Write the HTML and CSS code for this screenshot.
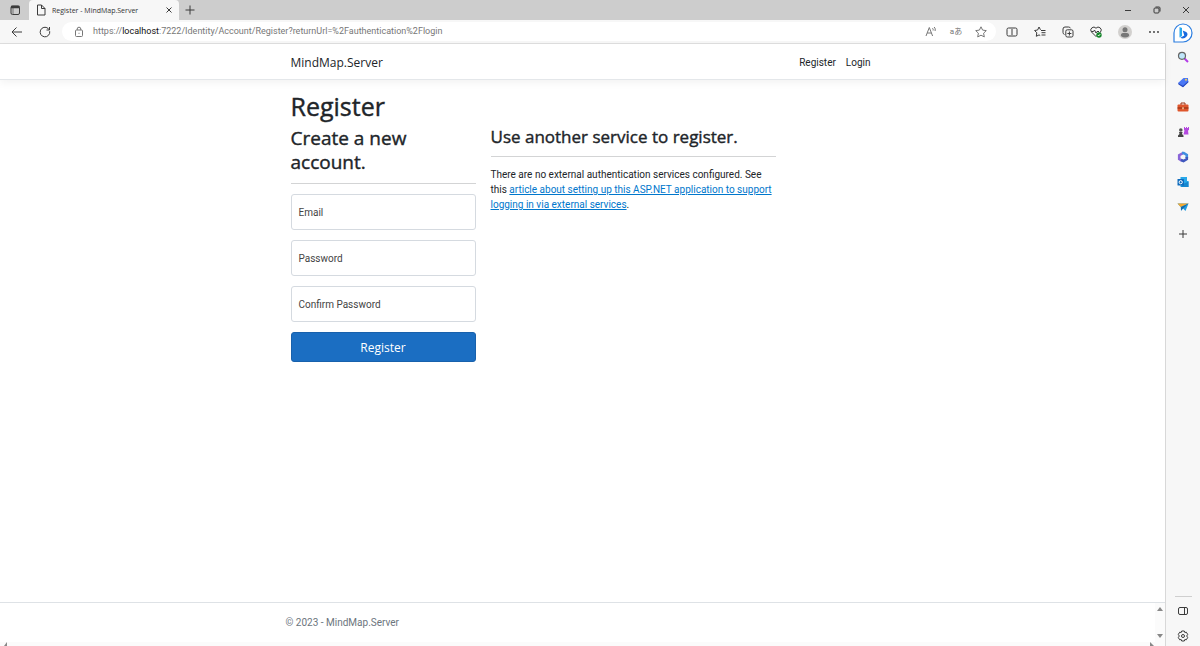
FILE: index.html
```html
<!DOCTYPE html>
<html lang="en">
<head>
<meta charset="utf-8">
<title>Register - MindMap.Server</title>
<link rel="stylesheet" href="styles.css">
</head>
<body>
<header class="tabs">
  <button class="tab-menu" aria-label="Tab actions"><svg class="icon" viewBox="0 0 12 12"><rect x="2" y="2" width="8.500" height="8.500" rx="1.500"/><path d="M2 3h8.500" stroke-width="2.500"/><path d="M4 4v6" stroke-width=".6"/></svg></button>
  <div class="tab">
    <svg class="icon" viewBox="0 0 12 12"><path d="M2.500 1h4l3.500 3.500V11h-7.500zM6.500 1v3.500H10"/></svg>
    <span class="tab-title">Register - MindMap.Server</span>
    <button class="tab-close" aria-label="Close tab"><svg class="icon" viewBox="0 0 12 12"><path d="M3.500 3.500l5 5M8.500 3.500l-5 5"/></svg></button>
  </div>
  <button class="new-tab" aria-label="New tab"><svg class="icon" viewBox="0 0 12 12"><path d="M6 1.500v9M1.500 6h9"/></svg></button>
  <div class="window-controls">
    <button aria-label="Minimize"><svg class="icon" viewBox="0 0 12 12"><path d="M3 6.500h6"/></svg></button>
    <button aria-label="Restore"><svg class="icon" viewBox="0 0 12 12"><rect x="3" y="4" width="5" height="5" rx="1"/><path d="M4.500 3H8q1 0 1 1v3.500"/></svg></button>
    <button aria-label="Close"><svg class="icon" viewBox="0 0 12 12"><path d="M3 3l6 6M9 3L3 9"/></svg></button>
  </div>
</header>
<div class="shell">
  <div class="browser">
    <div class="toolbar">
      <button aria-label="Back"><svg class="icon" viewBox="0 0 12 12"><path d="M11 6H1M5.500 1.500L1 6l4.500 4.500"/></svg></button>
      <button class="reload" aria-label="Reload"><svg class="icon" viewBox="0 0 12 12"><path d="M10.700 5.200a4.800 4.800 0 1 1-1.600-2.800L10.500 4M10.500 1v3h-3"/></svg></button>
      <div class="address">
        <svg class="icon muted" viewBox="0 0 12 12"><rect x="2.500" y="4" width="7" height="6.500" rx="1"/><path d="M4.200 4V3a1.800 1.800 0 0 1 3.600 0v1M6 6.800v1"/></svg>
        <span class="url">https://<b>localhost</b>:7222/Identity/Account/Register?returnUrl=%2Fauthentication%2Flogin</span>
        <div class="address-tools">
          <button aria-label="Read aloud"><svg class="icon muted" viewBox="0 0 12 12"><path d="M1 10l3.300-8.500L7.600 10M2.200 7h4.200M7.500 2.200q1 1 .6 2.300M9.200 1q1.600 1.600.9 4"/></svg></button>
          <button class="translate" aria-label="Translate">aあ</button>
          <button aria-label="Add to favorites"><svg class="icon muted" viewBox="0 0 12 12"><path d="M6 .8l1.600 3.300 3.700.5-2.700 2.600.7 3.700L6 9.200l-3.300 1.700.7-3.700L.7 4.600l3.700-.5z"/></svg></button>
        </div>
      </div>
      <div class="tools">
        <button aria-label="Split screen"><svg class="icon" viewBox="0 0 12 12"><path d="M5 2H2.500Q1 2 1 3.500v5Q1 10 2.500 10H5M7 2h2.500Q11 2 11 3.500v5Q11 10 9.500 10H7M6 1v10"/></svg></button>
        <button aria-label="Favorites"><svg class="icon" viewBox="0 0 12 12"><path d="M6.500 3.800L5 1 3.600 4 .6 4.500l2.200 2.300-.5 3.500L5 8.900l1.200.6M7 4.500h4.500M7.500 6.700h4M7.500 9h4"/></svg></button>
        <button aria-label="Collections"><svg class="icon" viewBox="0 0 12 12"><rect x="3.800" y="3.800" width="7.200" height="7.200" rx="1.500"/><path d="M2.500 8.500Q1 8 1 6.500V3Q1 1 3 1h3.500Q8 1 8.500 2.300M7.400 5.500v4M5.400 7.500h4"/></svg></button>
        <button aria-label="Browser essentials"><svg class="icon" viewBox="0 0 12 12"><path d="M6 10.500L1.500 6a2.700 2.700 0 0 1 4.500-3.800A2.700 2.700 0 0 1 10.500 6zM1.500 5.500h2l1-1.500 1.500 3 1-1.500h2"/><circle class="green" cx="9" cy="9" r="2.700"/><path class="white-line" d="M7.800 9l.9.9 1.500-1.700"/></svg></button>
        <button aria-label="Profile"><svg class="avatar" viewBox="0 0 14 14"><circle cx="7" cy="7" r="7" fill="#d2d0ce"/><circle cx="7" cy="4.800" r="2.500" fill="#777"/><path d="M2.800 11q0-3 2.300-3h3.800q2.300 0 2.300 3Q7 14 2.800 11z" fill="#777"/></svg></button>
        <button aria-label="Settings and more"><svg class="icon" viewBox="0 0 12 12"><g class="solid"><circle cx="2" cy="6" r=".9"/><circle cx="6" cy="6" r=".9"/><circle cx="10" cy="6" r=".9"/></g></svg></button>
      </div>
    </div>
    <div class="page">
      <nav class="navbar">
        <div class="container nav-row">
          <a class="brand" href="#">MindMap.Server</a>
          <div class="nav-links"><a href="#">Register</a><a href="#">Login</a></div>
        </div>
      </nav>
      <main class="container content">
        <h1>Register</h1>
        <div class="columns">
          <form class="account">
            <h2>Create a new account.</h2>
            <hr>
            <div class="field"><input id="email" type="email"><label for="email">Email</label></div>
            <div class="field"><input id="password" type="password"><label for="password">Password</label></div>
            <div class="field"><input id="confirm" type="password"><label for="confirm">Confirm Password</label></div>
            <button class="submit" type="button">Register</button>
          </form>
          <section class="external">
            <h3>Use another service to register.</h3>
            <hr>
            <p>There are no external authentication services configured. See<br>this <a href="#">article about setting up this ASP.NET application to support<br>logging in via external services</a>.</p>
          </section>
        </div>
      </main>
      <footer class="footer">
        <div class="footer-main"><div class="container footer-text">© 2023 - MindMap.Server</div></div>
        <div class="scroll-y">
          <svg class="arrow" viewBox="0 0 6 4"><path d="M0 4l3-4 3 4z"/></svg>
          <svg class="arrow" viewBox="0 0 6 4"><path d="M0 0l3 4 3-4z"/></svg>
        </div>
      </footer>
      <div class="scroll-x">
        <svg class="arrow" viewBox="0 0 4 4"><path d="M4 0v4H1z"/></svg>
        <svg class="arrow" viewBox="0 0 4 4"><path d="M0 0l4 4H0z"/></svg>
      </div>
    </div>
  </div>
  <aside class="sidebar">
    <button class="bing" aria-label="Bing"><svg viewBox="0 0 20 20"><path d="M1 19V10a9 9 0 1 1 9 9z" fill="#fff" stroke="#2b7de0" stroke-width="1.200"/><path d="M6.500 4l2.500.9v8L6.500 14.500z" fill="#2aa8ee"/><path d="M9.700 7.500l3.500 1.500q2.300 2 .6 4.200-2.800 3.300-6.500 1.600l4-2.400z" fill="#1769df"/></svg></button>
    <button aria-label="Search"><svg viewBox="0 0 12 12"><path d="M7.500 7.500L11 11" stroke="#b43ce8" stroke-width="2"/><circle cx="5" cy="4.800" r="3.500" fill="#bfe6fa" stroke="#666" stroke-width="1.200"/></svg></button>
    <button aria-label="Shopping"><svg viewBox="0 0 12 12"><path d="M1 7l5.500-5H11l.3 4.200L6 11.200z" fill="#4a78f5"/><path d="M1 7l.5 1.500L6 11.200l5.300-5V5L6 9.700z" fill="#2747bd"/><circle cx="9" cy="3.800" r="1" fill="#ffd34d"/></svg></button>
    <button aria-label="Tools"><svg viewBox="0 0 12 12"><path d="M4 4V2h4v2" fill="none" stroke="#963111"/><rect x=".5" y="3.500" width="11" height="7" rx="1" fill="#df562c"/><path d="M.5 6.500h11v1H.5z" fill="#87290f"/><path d="M5.300 6.200h1.400v2H5.300z" fill="#ffd3a3"/></svg></button>
    <button aria-label="Games"><svg viewBox="0 0 12 12"><path d="M7 1h1v1h1V1h1v1h1V1h1v3l-1 .5.5 4H6.500l1-4L7 4z" fill="#b44ae0"/><circle cx="3.800" cy="4" r="1.800" fill="#555"/><path d="M2 6h3.600L5 8l1.500 1.500V11H1V9.500L2.500 8z" fill="#444"/></svg></button>
    <button aria-label="Microsoft 365"><svg viewBox="0 0 12 12"><g fill="none" stroke-width="2.600"><path d="M6.500 1.800L2.200 4.200v3.800L5 9.700" stroke="#8a65d8"/><path d="M5 2h1.700L9.800 4v3" stroke="#408ee0"/><path d="M9.800 6v2L6.500 10 4 9" stroke="#4058bd"/></g></svg></button>
    <button aria-label="Outlook"><svg viewBox="0 0 12 12"><path d="M3.500 1H10v4h1.500v6h-8z" fill="#28a8ea"/><path d="M6 8l5.500-2.500V11H4z" fill="#1687cf"/><rect x=".5" y="3" width="6.500" height="6.500" rx=".6" fill="#0f6cbd"/><circle cx="3.700" cy="6.200" r="1.600" fill="none" stroke="#fff"/></svg></button>
    <button aria-label="Drop"><svg viewBox="0 0 12 12"><path d="M.5 2.500h11L8.500 10 6 7.500l-2 2.300L3.700 6z" fill="#239be0"/><path d="M.5 2.500h11L3.700 6z" fill="#f4a82d"/><path d="M4 9.800L4 6l7.500-3.500L6 7.500z" fill="#126aaa"/></svg></button>
    <button class="add" aria-label="Customize"><svg class="icon" viewBox="0 0 12 12"><path d="M6 2v8M2 6h8"/></svg></button>
    <div class="sidebar-bottom">
      <button aria-label="Hide sidebar"><svg class="icon" viewBox="0 0 12 12"><rect x="1.500" y="2.500" width="9" height="7" rx="1.500"/><path d="M7.500 2.500v7"/></svg></button>
      <button aria-label="Settings"><svg class="icon" viewBox="0 0 12 12"><path d="M4.700 1h2.600l.5 1.500 1.500-.3 1.400 2.200L9.700 6l1 1.600-1.400 2.200-1.500-.3-.5 1.500H4.700l-.5-1.500-1.500.3-1.400-2.200 1-1.600-1-1.600 1.400-2.200 1.500.3z"/><circle cx="6" cy="6" r="1.500"/></svg></button>
    </div>
  </aside>
</div>
</body>
</html>
```
FILE: styles.css
```css
* { box-sizing: border-box; }
body {
  margin: 0;
  height: 100vh;
  display: flex;
  flex-direction: column;
  overflow: hidden;
  background: #f7f7f7;
  color: #212529;
  font-family: Roboto, "Noto Sans CJK JP", sans-serif;
  font-size: 10px;
  line-height: 15px;
}
button {
  display: flex;
  align-items: center;
  justify-content: center;
  padding: 0;
  border: 0;
  background: none;
  color: inherit;
  font: inherit;
}
svg { display: block; flex: none; }
.icon { width: 12px; height: 12px; fill: none; stroke: #3b3b3b; stroke-width: 1; }
.muted { stroke: #777; }
.solid { fill: #333; stroke: none; }
.green { fill: #16872b; stroke: none; }
.white-line { stroke: #fff; }

.tabs { display: flex; height: 20px; flex: none; background: #cdcdcd; }
.tab-menu { width: 29px; }
.tab {
  display: flex;
  align-items: center;
  gap: 5px;
  width: 150px;
  padding: 0 4px 0 6px;
  border-radius: 4px 4px 0 0;
  background: #f7f7f7;
}
.tab-title { flex: 1; font-family: "Open Sans", sans-serif; font-size: 7px; white-space: nowrap; color: #333; }
.new-tab { width: 22px; }
.window-controls { display: flex; margin-left: auto; }
.window-controls button { width: 29px; }

.shell { display: flex; flex: 1; min-height: 0; }
.browser { display: flex; flex-direction: column; flex: 1; min-width: 0; }
.toolbar { display: flex; align-items: center; height: 24px; flex: none; padding-left: 11px; border-bottom: 1px solid #dedede; }
.reload { margin: 0 11px 0 16px; }
.address {
  display: flex;
  align-items: center;
  gap: 8px;
  flex: 1;
  height: 19px;
  padding: 0 9px 0 11px;
  border-radius: 10px;
  background: #fff;
}
.url { font-size: 9px; color: #777; white-space: nowrap; }
.url b { font-weight: 400; color: #111; }
.address-tools { display: flex; align-items: center; gap: 13px; margin-left: auto; }
.translate { width: 12px; font-size: 8px; color: #777; white-space: nowrap; }
.tools { display: flex; align-items: center; gap: 16px; padding: 0 6px 0 10px; }
.avatar { width: 14px; height: 14px; }

.page { display: flex; flex-direction: column; flex: 1; min-height: 0; background: #fff; border-right: 1px solid #d8d8d8; }
.container { width: 100%; max-width: 600px; margin: 0 auto; padding: 0 8px; }
.navbar { display: flex; align-items: center; height: 36px; padding-top: 1px; border-bottom: 1px solid #e4e7ea; box-shadow: 0 3px 8px rgba(0, 0, 0, .05); }
.nav-row { display: flex; align-items: center; justify-content: space-between; }
.nav-row a { color: #212529; text-decoration: none; }
.brand, .submit, h1, h2, h3 { font-family: "Open Sans", "Noto Sans", sans-serif; }
.brand { font-size: 12px; }
.nav-links { display: flex; gap: 10px; padding-right: 4px; }
.content { flex: 1; padding-top: 11px; }
h1, h2, h3 { margin: 0; font-weight: 400; -webkit-text-stroke: 0.4px currentColor; }
h1 { font-size: 25px; line-height: 30px; }
h2 { font-size: 19px; line-height: 24px; margin-top: 5px; }
h3 { font-size: 17px; line-height: 20px; margin-top: 6px; }
hr { height: 1px; margin: 9px 0 10px; border: 0; background: #d3d4d5; }
.columns { display: grid; grid-template-columns: 185px 285px; gap: 15px; }
.field { position: relative; margin-bottom: 10px; }
.field input { display: block; width: 100%; height: 36px; padding: 12px 8px 2px; border: 1px solid #d5dae0; border-radius: 3px; font: inherit; }
.field label { position: absolute; left: 8px; top: 11px; color: #444; pointer-events: none; }
.submit { width: 100%; height: 30px; border: 1px solid #1861ac; border-radius: 3px; background: #1b6ec2; color: #fff; font-size: 12px; }
.external p { margin: 0; white-space: nowrap; }
.external a { color: #0077cc; }
.footer { display: flex; height: 40px; border-top: 1px solid #dee2e6; }
.footer-main { flex: 1; display: flex; align-items: center; }
.footer-text { color: #6c757d; }
.scroll-y { display: flex; flex-direction: column; justify-content: space-between; align-items: center; width: 10px; padding: 4px 0; background: #fbfbfb; }
.arrow { width: 6px; height: 4px; fill: #888; }
.scroll-x { display: flex; justify-content: space-between; height: 4px; padding: 0 10px 0 2px; background: #fbfbfb; }

.sidebar { display: flex; flex-direction: column; align-items: center; width: 34px; padding-top: 2px; }
.sidebar button { width: 25px; height: 25px; flex: none; }
.sidebar svg { width: 12px; height: 12px; }
.sidebar .bing { height: 22px; }
.sidebar .bing svg { width: 20px; height: 20px; }
.sidebar .add { margin-top: 2px; }
.sidebar-bottom { margin: auto 0 -2px; }
.sidebar-bottom::before { content: ""; display: block; width: 17px; height: 1px; margin: 0 auto 1px; background: #cfcfcf; }
```
